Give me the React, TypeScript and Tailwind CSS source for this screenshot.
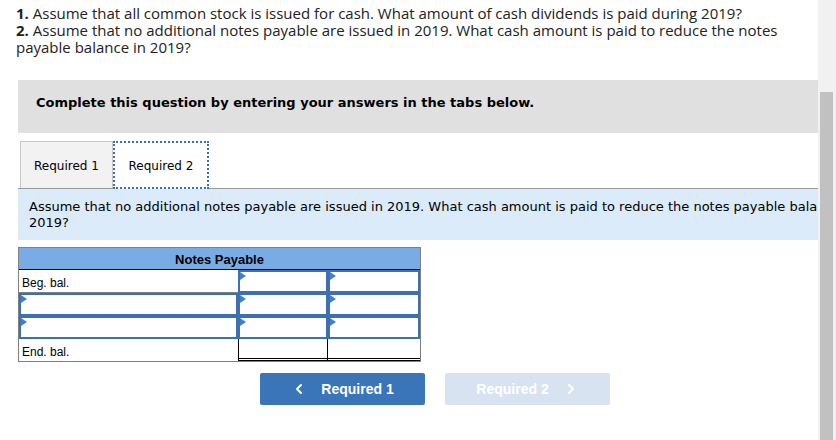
import { ChevronLeft, ChevronRight } from "lucide-react";

function InputCell({ w }: { w: string }) {
  return (
    <div className={`relative h-full border-2 border-[#3d6fb3] bg-white ${w}`}>
      <span className="absolute left-0 top-0 h-0 w-0 border-y-[4px] border-l-[6px] border-y-transparent border-l-[#3f7fcf]" />
    </div>
  );
}

export default function App() {
  return (
    <div className="flex h-[440px] w-[836px] overflow-hidden bg-white">
      <div className="w-[818px] shrink-0 overflow-hidden">
        <div className="px-[16px] pt-[5px] font-['Open_Sans',sans-serif] text-[15px] leading-[17px] text-[#222]">
          <p>
            <b>1.</b> Assume that all common stock is issued for cash. What amount of cash dividends is paid during 2019?
          </p>
          <p>
            <b>2.</b> Assume that no additional notes payable are issued in 2019. What cash amount is paid to reduce the notes
            payable balance in 2019?
          </p>
        </div>

        <div className="ml-[18px] mt-[24px] flex h-[53px] w-[800px] items-center bg-[#e0e0e0] pb-[7px] pl-[18px] font-['DejaVu_Sans',sans-serif] text-[13px] font-bold text-black">
          Complete this question by entering your answers in the tabs below.
        </div>

        <div className="ml-[18px] mt-[8px] w-[800px] border-b border-[#9a9a9a]">
          <div className="flex h-[47px] items-stretch pl-[2px] font-['DejaVu_Sans',sans-serif] text-[12px] text-black">
            <div className="flex w-[93px] items-center justify-center border border-b-0 border-[#c8c8c8] bg-[#f2f2f2] pt-[2px]">
              Required 1
            </div>
            <div className="-mb-px flex w-[96px] items-center justify-center border-2 border-dotted border-[#3d6fb3] bg-white pt-[2px]">
              Required 2
            </div>
          </div>
        </div>

        <div className="ml-[18px] h-[51px] w-[800px] overflow-hidden bg-[#dbebf9] pl-[11px] pt-[10px] font-['DejaVu_Sans',sans-serif] text-[13px] leading-[16px] text-black">
          <p className="w-[900px]">
            Assume that no additional notes payable are issued in 2019. What cash amount is paid to reduce the notes payable bala
          </p>
          <p>2019?</p>
        </div>

        <div className="ml-[18px] mt-[7px] w-[403px] border border-[#808080] font-['Liberation_Sans',sans-serif] text-[12px] text-black">
          <div className="flex h-[22px] items-center justify-center border-b border-black bg-[#79ace5] pt-[2px] text-[13px] font-bold">
            Notes Payable
          </div>
          <div className="flex h-[23px]">
            <div className="flex w-[219px] items-center border-b border-[#808080] pl-[3px] pt-[3px]">Beg. bal.</div>
            <InputCell w="w-[90px]" />
            <InputCell w="w-[92px]" />
          </div>
          <div className="flex h-[23px]">
            <InputCell w="w-[219px]" />
            <InputCell w="w-[90px]" />
            <InputCell w="w-[92px]" />
          </div>
          <div className="flex h-[23px]">
            <InputCell w="w-[219px]" />
            <InputCell w="w-[90px]" />
            <InputCell w="w-[92px]" />
          </div>
          <div className="flex h-[22px]">
            <div className="flex w-[219px] items-center pl-[3px] pt-[3px]">End. bal.</div>
            <div className="w-[90px] border-x border-b-[3px] border-x-black border-b-black [border-bottom-style:double]" />
            <div className="w-[92px] border-b-[3px] border-b-black [border-bottom-style:double]" />
          </div>
        </div>

        <div className="mt-[11px] flex gap-[20px] pl-[260px] font-['Liberation_Sans',sans-serif] text-[14px] font-bold text-white">
          <button className="flex h-[32px] w-[165px] items-center justify-center gap-[14px] rounded-[2px] bg-[#3a75b9]">
            <ChevronLeft size={16} strokeWidth={3} />
            Required 1
          </button>
          <button className="flex h-[32px] w-[165px] items-center justify-center gap-[14px] rounded-[2px] bg-[#d7e3f1]">
            Required 2
            <ChevronRight size={16} strokeWidth={3} />
          </button>
        </div>
      </div>

      <div className="flex w-[18px] shrink-0 flex-col bg-[#f1f1f1] pl-[2px] pr-[3px] pt-[92px]">
        <div className="flex-1 bg-[#c1c1c1]" />
      </div>
    </div>
  );
}
